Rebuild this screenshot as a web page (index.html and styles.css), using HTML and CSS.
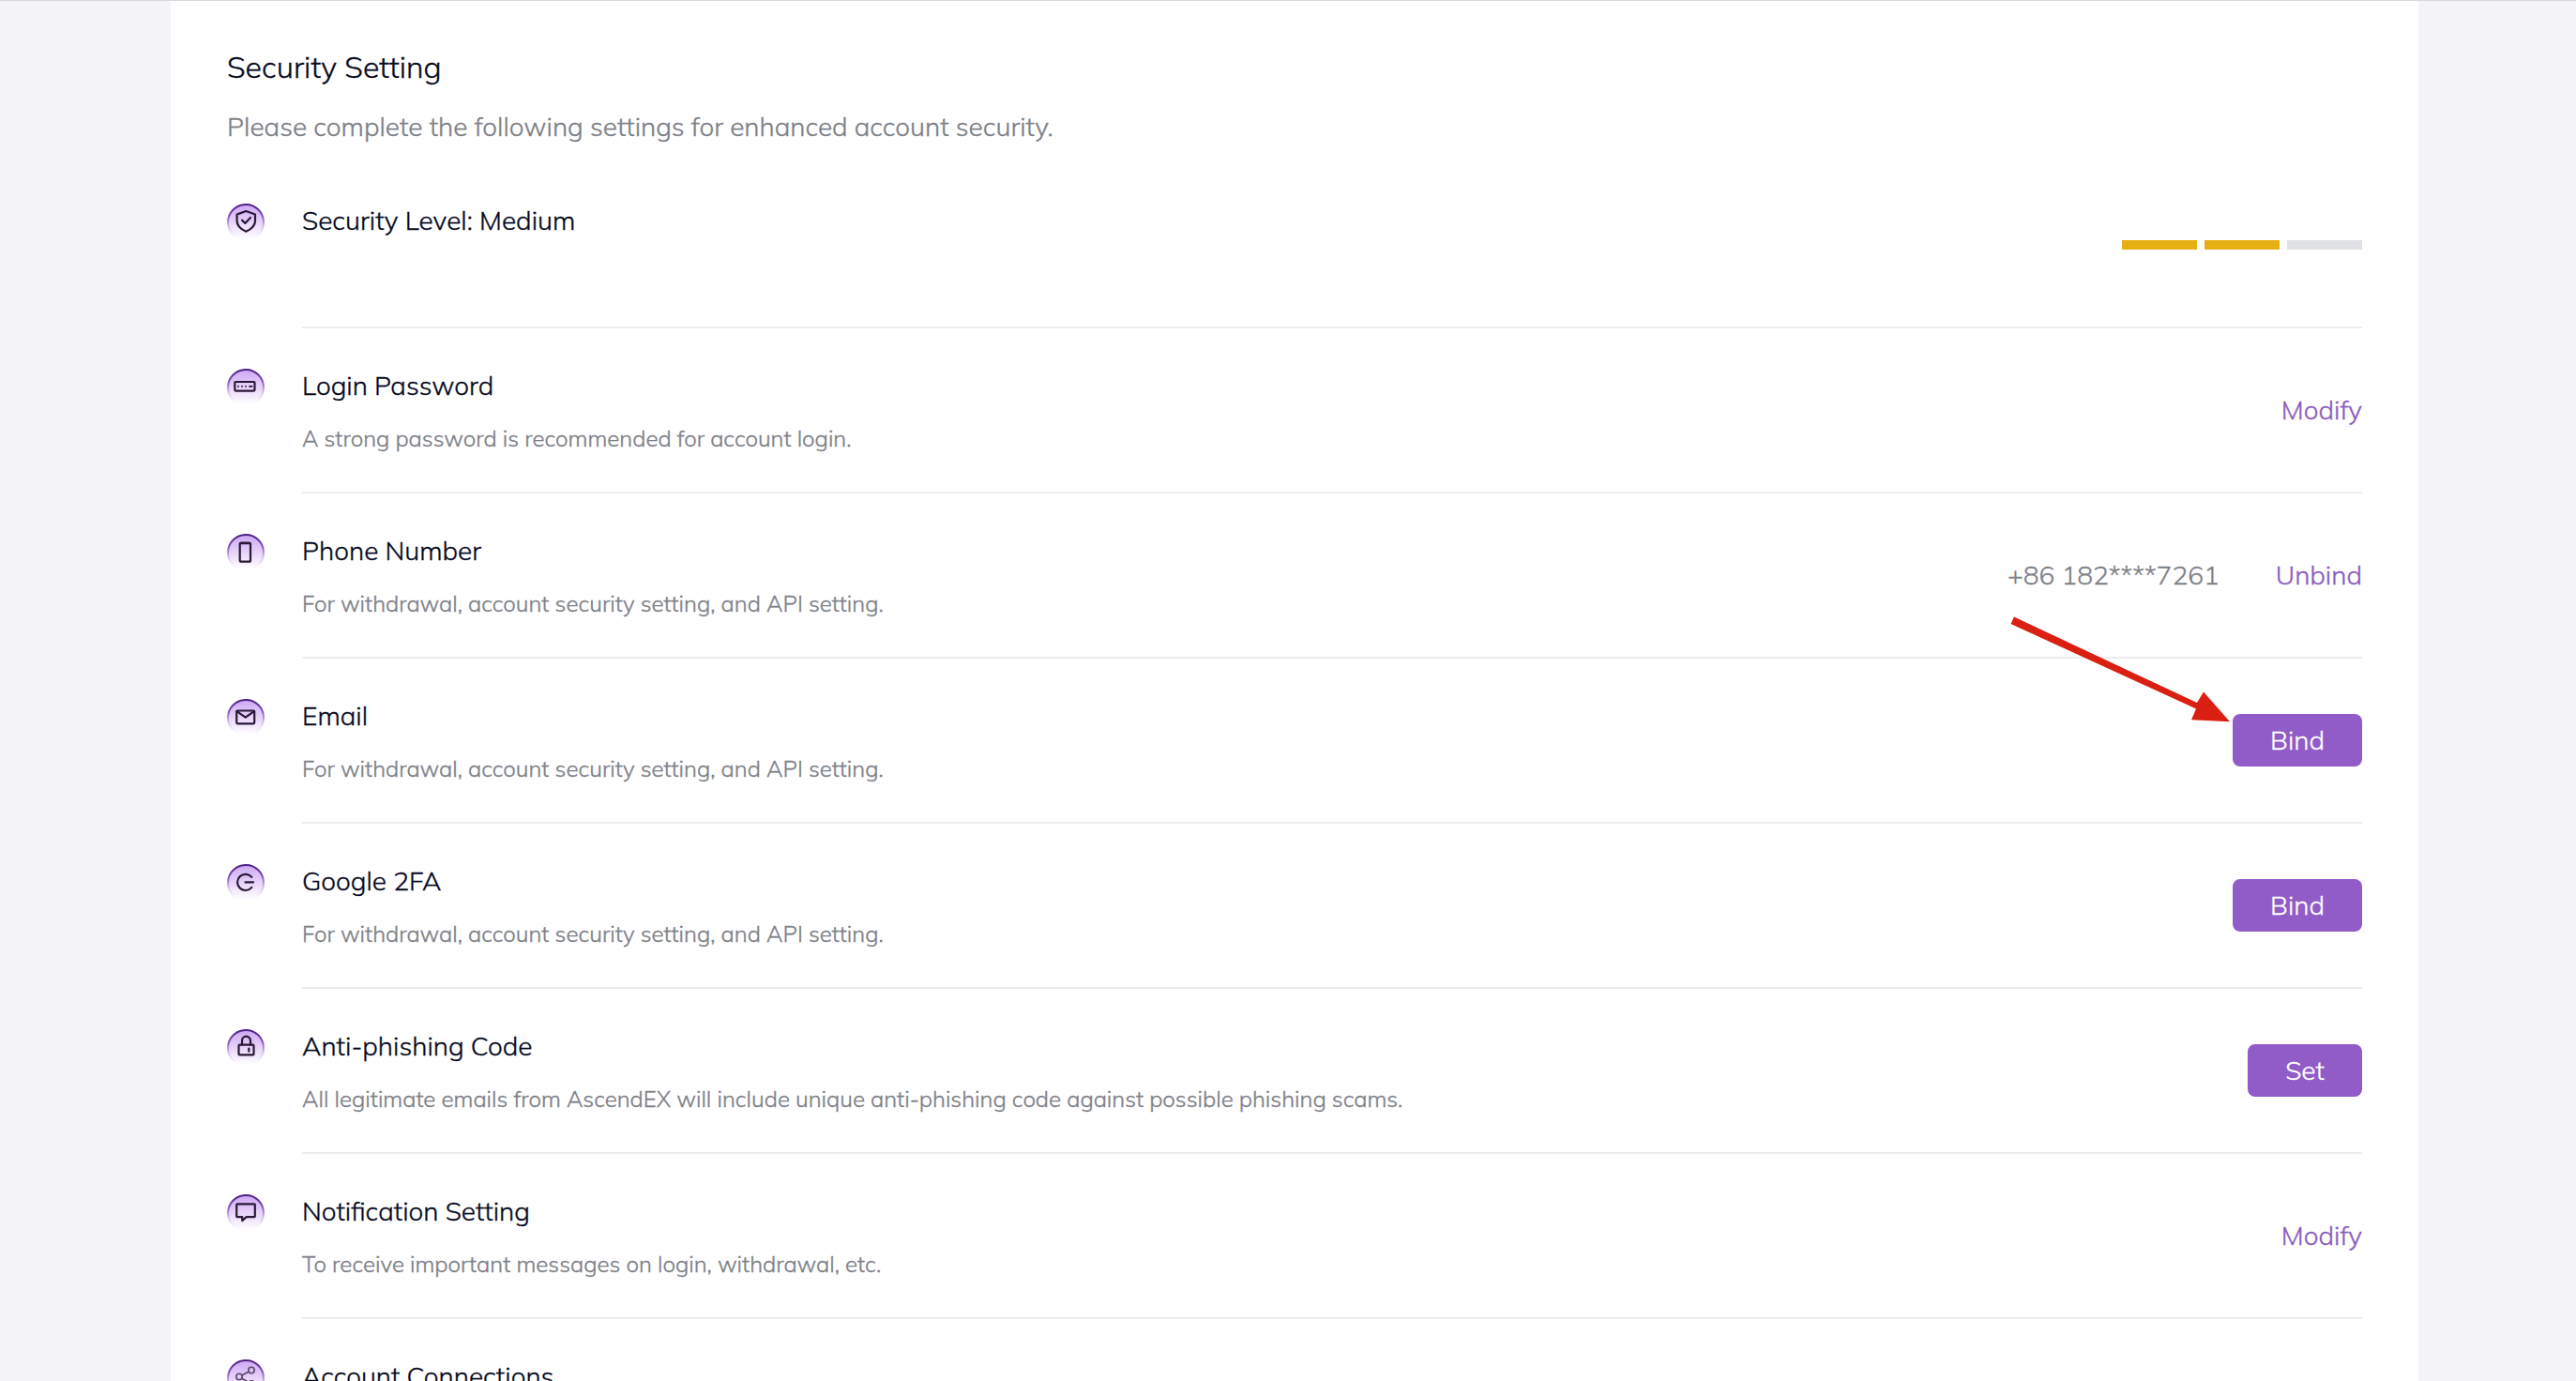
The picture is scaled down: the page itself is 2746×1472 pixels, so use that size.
FILE: index.html
```
<!DOCTYPE html>
<html lang="en">
<head>
    <meta charset="UTF-8">
    <meta name="viewport" content="width=device-width, initial-scale=1.0">
    <title>Security Setting</title>
    <link rel="stylesheet" href="styles.css">
</head>
<body>
<!-- Shared gradients for the round icons -->
<svg class="defs" width="0" height="0">
    <defs>
        <linearGradient id="ring" x1="0" y1="0" x2="0" y2="1">
            <stop offset="0" stop-color="#4b1d80"/>
            <stop offset="0.35" stop-color="#8a5abf"/>
            <stop offset="1" stop-color="#ffffff" stop-opacity="0"/>
        </linearGradient>
        <linearGradient id="fade" x1="0" y1="0" x2="0" y2="1">
            <stop offset="0" stop-color="#cda4f4"/>
            <stop offset="0.95" stop-color="#ffffff"/>
        </linearGradient>
        <g id="disc">
            <circle cx="20" cy="20" r="19.5" fill="url(#fade)" stroke="none"/>
            <circle cx="20" cy="20" r="19" fill="none" stroke="url(#ring)" stroke-width="2"/>
        </g>
    </defs>
</svg>

<div class="container">
    <h1>Security Setting</h1>
    <p class="intro">Please complete the following settings for enhanced account security.</p>

    <div class="row">
        <svg class="icon" viewBox="0 0 40 40"><use href="#disc"/><path d="M20.3 8l9.7 3.5v6.7c0 5-3.6 8.8-9.7 11.5-6.1-2.7-9.7-6.5-9.7-11.5v-6.7z"/><path d="M16 17.7l3.3 3.2 5.7-5.9"/></svg>
        <div class="content">
            <div class="info">
                <h2>Security Level: Medium</h2>
            </div>
            <div class="level">
                <span class="bar on"></span>
                <span class="bar on"></span>
                <span class="bar"></span>
            </div>
        </div>
    </div>

    <div class="row">
        <svg class="icon" viewBox="0 0 40 40"><use href="#disc"/><rect x="8.3" y="14" width="21.2" height="9.6" rx="1"/><path class="fine" d="M11.2 18.9h1.6M15.2 18.9h1.6M19.2 18.9h1.6M23.3 18.9h4"/></svg>
        <div class="content">
            <div class="info">
                <h2>Login Password</h2>
                <p class="desc">A strong password is recommended for account login.</p>
            </div>
            <a class="link" href="#">Modify</a>
        </div>
    </div>

    <div class="row">
        <svg class="icon" viewBox="0 0 40 40"><use href="#disc"/><rect x="13.7" y="9.5" width="11.3" height="20.2" rx="1.5"/><path d="M14.5 10.2h9.7"/></svg>
        <div class="content">
            <div class="info">
                <h2>Phone Number</h2>
                <p class="desc">For withdrawal, account security setting, and API setting.</p>
            </div>
            <span class="value">+86 182****7261</span>
            <a class="link" href="#">Unbind</a>
        </div>
    </div>

    <div class="row">
        <svg class="icon" viewBox="0 0 40 40"><use href="#disc"/><rect x="10.2" y="12.5" width="19" height="13.8" rx="1"/><path d="M10.5 13.2l9.2 6.5 9.2-6.5"/></svg>
        <div class="content">
            <div class="info">
                <h2>Email</h2>
                <p class="desc">For withdrawal, account security setting, and API setting.</p>
            </div>
            <button class="button">Bind</button>
        </div>
        <!-- Arrow pointing at the email button -->
        <svg class="arrow" viewBox="0 0 234 116"><path d="M4 0.5L199 92l7-11.5 28 31.7-41-2 5-11.7L0.5 8z"/></svg>
    </div>

    <div class="row">
        <svg class="icon" viewBox="0 0 40 40"><use href="#disc"/><path d="M26.3 13.9a8.6 8.6 0 1 0 0 11M19.5 19.4h8.5"/></svg>
        <div class="content">
            <div class="info">
                <h2>Google 2FA</h2>
                <p class="desc">For withdrawal, account security setting, and API setting.</p>
            </div>
            <button class="button">Bind</button>
        </div>
    </div>

    <div class="row">
        <svg class="icon" viewBox="0 0 40 40"><use href="#disc"/><rect x="12.5" y="16.7" width="16" height="10.7" rx="1"/><path d="M16 16.7v-4.5a4.5 4.5 0 0 1 9 0v4.5M23.3 20.5v3.2"/></svg>
        <div class="content">
            <div class="info">
                <h2>Anti-phishing Code</h2>
                <p class="desc">All legitimate emails from AscendEX will include unique anti-phishing code against possible phishing scams.</p>
            </div>
            <button class="button">Set</button>
        </div>
    </div>

    <div class="row">
        <svg class="icon" viewBox="0 0 40 40"><use href="#disc"/><path d="M11 10.3h18a.8.8 0 0 1 .8.8v12.2a.8.8 0 0 1-.8.8h-8.3l-4.5 4v-4h-5.2a.8.8 0 0 1-.8-.8v-12.2a.8.8 0 0 1 .8-.8z"/></svg>
        <div class="content">
            <div class="info">
                <h2>Notification Setting</h2>
                <p class="desc">To receive important messages on login, withdrawal, etc.</p>
            </div>
            <a class="link" href="#">Modify</a>
        </div>
    </div>

    <div class="row">
        <svg class="icon" viewBox="0 0 40 40"><use href="#disc"/><g class="thin"><circle cx="26" cy="11.5" r="3.2"/><circle cx="13" cy="18.5" r="3.2"/><circle cx="26" cy="26" r="3.2"/><path d="M15.8 17l7.4-4M15.8 20.2l7.4 4.2"/></g></svg>
        <div class="content">
            <div class="info">
                <h2>Account Connections</h2>
            </div>
        </div>
    </div>
</div>
</body>
</html>
```
FILE: styles.css
```
/* General styles */
* {
    box-sizing: border-box;
}

body {
    font-family: Mulish, Lato, sans-serif;
    font-size: 28px;
    font-weight: 300;
    -webkit-text-stroke-width: 0.35px;
    background-color: #f4f4f7;
    border-top: 1px solid #d9d9dd;
    margin: 0;
    height: 1472px;
    overflow: hidden;
}

h1, h2, p {
    margin: 0;
    font-weight: inherit;
}

.defs {
    position: absolute;
}

/* Container styles */
.container {
    width: 2396px;
    height: 1471px;
    margin-left: 182px;
    padding: 48px 60px 0;
    background-color: #ffffff;
}

h1 {
    font-size: 32px;
    line-height: 44px;
    color: #050820;
}

.intro {
    line-height: 40px;
    margin-top: 22px;
    margin-bottom: 19px;
    color: #7d8087;
}

/* Row styles */
.row {
    position: relative;
    display: flex;
    gap: 40px;
    height: 176px;
}

.icon {
    flex: none;
    width: 40px;
    height: 40px;
    margin-top: 43px;
    fill: none;
    stroke: #2a1838;
    stroke-width: 2.2;
    stroke-linecap: round;
    stroke-linejoin: round;
}

.icon .fine {
    stroke-width: 1.8;
    stroke-linecap: butt;
}

.icon .thin {
    stroke: #5b4a68;
    stroke-width: 1.6;
}

.content {
    flex: 1;
    display: flex;
    align-items: center;
    border-bottom: 2px solid #ededee;
}

.info {
    flex: 1;
    align-self: flex-start;
    padding-top: 41px;
}

h2 {
    font-size: 28px;
    line-height: 40px;
    color: #050820;
}

.desc {
    font-size: 24px;
    line-height: 34px;
    margin-top: 19px;
    color: #7d8087;
}

.value {
    color: #7d8087;
    margin-right: 60px;
    padding-bottom: 2px;
}

.link {
    color: #8a5bbd;
    text-decoration: none;
    padding-bottom: 2px;
}

/* Security level bars */
.level {
    display: flex;
    gap: 8px;
}

.bar {
    width: 80px;
    height: 10px;
    background-color: #e0e1e4;
}

.bar.on {
    background-color: #e5b014;
}

/* Button styles */
.button {
    height: 56px;
    padding: 0 40px 2px;
    font-family: inherit;
    font-size: 28px;
    font-weight: inherit;
    color: #ffffff;
    background-color: #915bc8;
    border: none;
    border-radius: 8px;
    cursor: pointer;
}

/* Arrow over the rows */
.arrow {
    position: absolute;
    top: -45px;
    right: 141px;
    width: 234px;
    height: 116px;
    fill: #da2012;
}
```
